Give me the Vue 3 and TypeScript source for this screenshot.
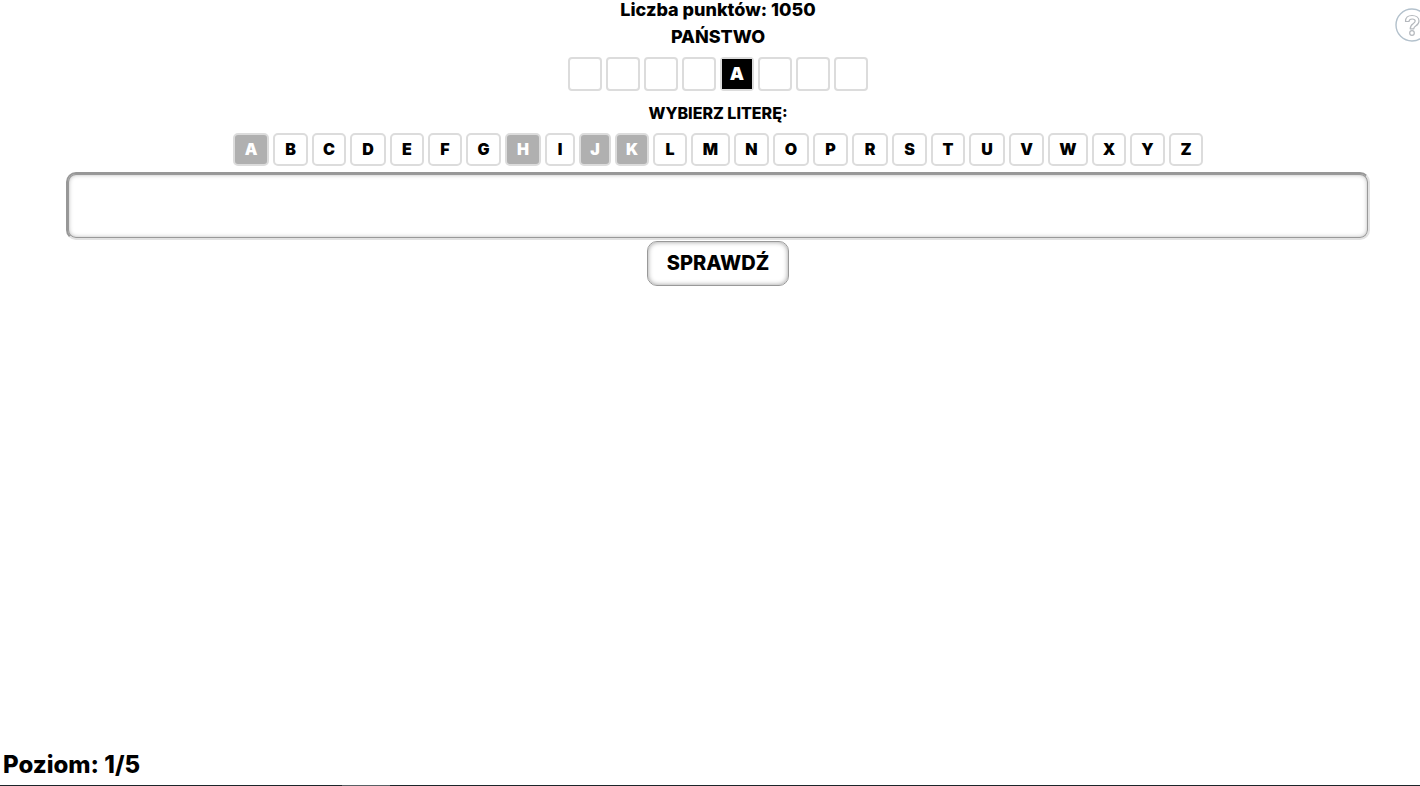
<script setup lang="ts">
import { ref } from 'vue'

interface Letter {
  char: string
  width: number
  used?: boolean
}

const score = 1050
const category = 'PAŃSTWO'
const level = 1
const levels = 5
const slots: string[] = ['', '', '', '', 'A', '', '', '']
const answer = ref('')

const letters = ref<Letter[]>([
  { char: 'A', width: 36, used: true },
  { char: 'B', width: 35 },
  { char: 'C', width: 34 },
  { char: 'D', width: 36 },
  { char: 'E', width: 34 },
  { char: 'F', width: 34 },
  { char: 'G', width: 35 },
  { char: 'H', width: 36, used: true },
  { char: 'I', width: 30 },
  { char: 'J', width: 32, used: true },
  { char: 'K', width: 34, used: true },
  { char: 'L', width: 34 },
  { char: 'M', width: 39 },
  { char: 'N', width: 35 },
  { char: 'O', width: 36 },
  { char: 'P', width: 35 },
  { char: 'R', width: 36 },
  { char: 'S', width: 35 },
  { char: 'T', width: 34 },
  { char: 'U', width: 36 },
  { char: 'V', width: 35 },
  { char: 'W', width: 40 },
  { char: 'X', width: 34 },
  { char: 'Y', width: 35 },
  { char: 'Z', width: 34 },
])
</script>

<template>
  <div class="page">
    <main class="game">
      <h1 class="score">Liczba punktów: {{ score }}</h1>
      <h2 class="category">{{ category }}</h2>
      <div class="slots">
        <span v-for="(s, i) in slots" :key="i" class="slot"><b v-if="s" class="filled">{{ s }}</b></span>
      </div>
      <h3 id="pick" class="prompt">WYBIERZ LITERĘ:</h3>
      <div class="letters" role="group" aria-labelledby="pick">
        <button
          v-for="l in letters"
          :key="l.char"
          type="button"
          class="letter"
          :disabled="l.used"
          :style="{ width: l.width + 'px' }"
          @click="l.used = true"
        >{{ l.char }}</button>
      </div>
      <input v-model="answer" class="answer" type="text" aria-label="Hasło" />
      <button type="button" class="check">SPRAWDŹ</button>
    </main>
    <button type="button" class="help" aria-label="Pomoc">
      <svg viewBox="0 0 34 34" width="34" height="34" fill="none">
        <circle cx="17" cy="17" r="16" stroke="#b3c1cc" stroke-width="1.4" />
        <path
          d="M10.500 13.500C10.500 9.500 13 7.500 17 7.500s7 2.200 7 5.500c0 2.700-1.600 4-3.300 5.100-1.400.9-1.900 1.400-1.900 2.700H15.200c0-2.700.9-3.800 2.900-5.100 1.500-1 2.100-1.500 2.100-2.600 0-1.300-1.100-2.100-3-2.100-2 0-3.100.9-3.200 2.500z"
          stroke="#b4b8bd"
          stroke-width="1.200"
          stroke-linejoin="round"
        />
        <circle cx="17" cy="25" r="2.300" stroke="#b4b8bd" stroke-width="1.200" />
      </svg>
    </button>
    <footer class="level">Poziom: {{ level }}/{{ levels }}</footer>
    <div class="edge"></div>
  </div>
</template>

<style>
body {
  margin: 0;
  background: #fff;
}
</style>

<style scoped>
.page {
  position: relative;
  display: flex;
  flex-direction: column;
  min-height: 100vh;
  overflow: hidden;
  color: #000;
  font-family: Inter, "Liberation Sans", sans-serif;
  font-weight: 800;
}
.game {
  flex: 1;
  display: flex;
  flex-direction: column;
  align-items: center;
  padding-left: 16px;
}
h1, h2, h3 {
  margin: 0;
  font-weight: 800;
}
.score {
  font-size: 18px;
  line-height: 20px;
}
.category {
  margin-top: 6px;
  font-size: 18px;
  line-height: 22px;
}
.slots {
  display: flex;
  gap: 4px;
  margin-top: 9px;
}
.slot {
  box-sizing: border-box;
  width: 34px;
  height: 34px;
  border: 2px solid #dcdcdc;
  border-radius: 4px;
  font-size: 18px;
  line-height: 30px;
  text-align: center;
}
.filled {
  display: block;
  background: #000;
  color: #fff;
  font-weight: 900;
}
.prompt {
  margin-top: 12px;
  font-size: 16px;
  line-height: 20px;
}
.letters {
  display: flex;
  flex-wrap: wrap;
  justify-content: center;
  gap: 4px;
  margin-top: 10px;
}
.letter {
  box-sizing: border-box;
  height: 33px;
  padding: 0 0 1px;
  border: 2px solid #dcdcdc;
  border-radius: 5px;
  background: #fff;
  color: #000;
  font: inherit;
  font-size: 16px;
  font-weight: 900;
}
.letter:disabled {
  background: #b0b0b0;
  color: #fff;
}
.answer {
  box-sizing: border-box;
  align-self: stretch;
  height: 68px;
  margin: 6px 50px 0;
  padding: 0 16px;
  border: 2px solid;
  border-color: #979797 #e2e2e2 #e2e2e2 #979797;
  border-radius: 10px;
  background: #fff;
  box-shadow: inset 0 0 0 1px #999, inset 0 0 5px #999;
  color: #000;
  font: inherit;
  font-size: 24px;
  outline: none;
}
.check {
  box-sizing: border-box;
  height: 45px;
  margin-top: 1px;
  padding: 0 19px 1px;
  border: 1px solid #999;
  border-radius: 10px;
  background: #fff;
  box-shadow: inset 0 0 5px #999;
  color: #000;
  font: inherit;
  font-size: 20px;
}
.help {
  position: absolute;
  top: 8px;
  right: -9px;
  width: 34px;
  height: 34px;
  padding: 0;
  border: 0;
  background: none;
}
.help svg {
  display: block;
}
.level {
  padding: 0 3px 5px;
  font-size: 24px;
  line-height: 30px;
}
.edge {
  height: 1px;
  background: linear-gradient(90deg, #1d2529 342px, #596064 342px, #596064 390px, #1d2529 390px);
}
</style>
